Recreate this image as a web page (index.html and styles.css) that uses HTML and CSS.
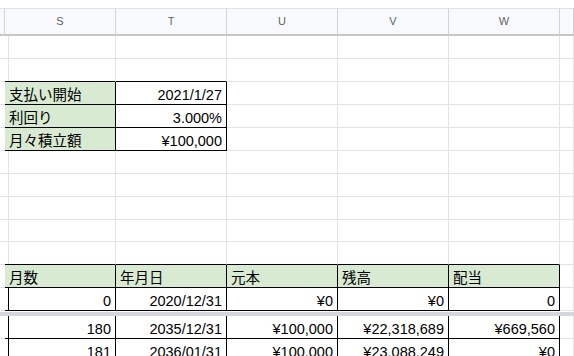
FILE: index.html
```html
<!DOCTYPE html>
<html lang="ja">
<head>
<meta charset="utf-8">
<title>Sheet</title>
<link rel="stylesheet" href="styles.css">
</head>
<body>
<div class="sheet">
  <div class="row colhead">
    <div class="c"></div><div class="c">S</div><div class="c">T</div><div class="c">U</div><div class="c">V</div><div class="c">W</div><div class="c"></div>
  </div>
  <div class="row">
    <div class="c"></div><div class="c"></div><div class="c"></div><div class="c"></div><div class="c"></div><div class="c"></div><div class="c"></div>
  </div>
  <div class="row">
    <div class="c"></div><div class="c bb"></div><div class="c bb"></div><div class="c"></div><div class="c"></div><div class="c"></div><div class="c"></div>
  </div>
  <div class="row">
    <div class="c br"></div><div class="c g br bb">支払い開始</div><div class="c r br bb">2021/1/27</div><div class="c"></div><div class="c"></div><div class="c"></div><div class="c"></div>
  </div>
  <div class="row">
    <div class="c br"></div><div class="c g br bb">利回り</div><div class="c r br bb">3.000%</div><div class="c"></div><div class="c"></div><div class="c"></div><div class="c"></div>
  </div>
  <div class="row">
    <div class="c br"></div><div class="c g br bb">月々積立額</div><div class="c r br bb">¥100,000</div><div class="c"></div><div class="c"></div><div class="c"></div><div class="c"></div>
  </div>
  <div class="row">
    <div class="c"></div><div class="c"></div><div class="c"></div><div class="c"></div><div class="c"></div><div class="c"></div><div class="c"></div>
  </div>
  <div class="row">
    <div class="c"></div><div class="c"></div><div class="c"></div><div class="c"></div><div class="c"></div><div class="c"></div><div class="c"></div>
  </div>
  <div class="row">
    <div class="c"></div><div class="c"></div><div class="c"></div><div class="c"></div><div class="c"></div><div class="c"></div><div class="c"></div>
  </div>
  <div class="row short">
    <div class="c"></div><div class="c"></div><div class="c"></div><div class="c"></div><div class="c"></div><div class="c"></div><div class="c"></div>
  </div>
  <div class="row">
    <div class="c"></div><div class="c bb"></div><div class="c bb"></div><div class="c bb"></div><div class="c bb"></div><div class="c bb"></div><div class="c"></div>
  </div>
  <div class="row">
    <div class="c br"></div><div class="c g br bb">月数</div><div class="c g br bb">年月日</div><div class="c g br bb">元本</div><div class="c g br bb">残高</div><div class="c g br bb">配当</div><div class="c"></div>
  </div>
  <div class="row">
    <div class="c br"></div><div class="c r br bb">0</div><div class="c r br bb">2020/12/31</div><div class="c r br bb">¥0</div><div class="c r br bb">¥0</div><div class="c r br bb">0</div><div class="c"></div>
  </div>
  <div class="freeze"></div>
  <div class="row">
    <div class="c br"></div><div class="c r br bb">180</div><div class="c r br bb">2035/12/31</div><div class="c r br bb">¥100,000</div><div class="c r br bb">¥22,318,689</div><div class="c r br bb">¥669,560</div><div class="c"></div>
  </div>
  <div class="row">
    <div class="c br"></div><div class="c r br bb">181</div><div class="c r br bb">2036/01/31</div><div class="c r br bb">¥100,000</div><div class="c r br bb">¥23,088,249</div><div class="c r br bb">¥0</div><div class="c"></div>
  </div>
</div>
</body>
</html>
```

FILE: styles.css
```css
html, body {
  margin: 0;
  background: #ffffff;
  overflow: hidden;
}

body {
  font-family: "Liberation Sans", "Noto Sans CJK JP", sans-serif;
  color: #000000;
}

.sheet {
  padding-top: 8px;
}

.row {
  display: grid;
  grid-template-columns: 5px repeat(5, 111px) 1fr;
  height: 23px;
}

.row.short {
  height: 22px;
}

.c {
  box-sizing: border-box;
  border-right: 1px solid #e2e2e2;
  border-bottom: 1px solid #e2e2e2;
  font-size: 14.5px;
  line-height: 18px;
  padding: 4px 4px 0 4px;
  white-space: nowrap;
  overflow: hidden;
}

.r {
  text-align: right;
}

.g {
  background: #d9ead3;
}

.br {
  border-right-color: #000000;
}

.bb {
  border-bottom-color: #000000;
}

.colhead {
  height: 28px;
}

.colhead .c {
  background: #f8f9fa;
  border-top: 1px solid #e1e3e1;
  border-bottom: 2px solid #c7c7c7;
  border-right-color: #d3d3d3;
  text-align: center;
  font-size: 11px;
  line-height: 25px;
  padding: 0;
  color: #5f6368;
}

.freeze {
  height: 4px;
  border-top: 1px solid #ffffff;
  background: #d4d7db;
}
```
